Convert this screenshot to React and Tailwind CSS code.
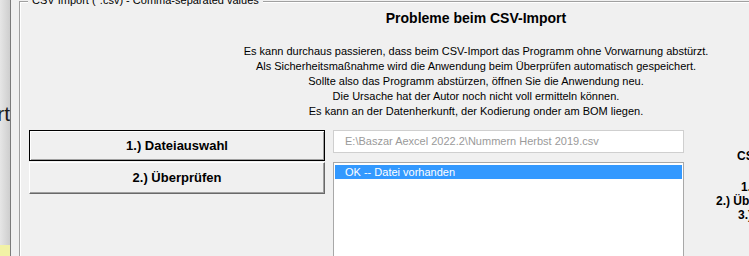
export default function App() {
  return (
    <div className="flex h-[256px] w-[749px] overflow-hidden bg-[#f0f0f0] font-['Liberation_Sans',Arial,sans-serif] text-black">
      {/* window behind, only a sliver visible */}
      <div className="flex w-[10px] shrink-0 flex-col overflow-hidden bg-gradient-to-r from-[#e6e6e6] to-[#cecece]">
        <div className="mt-[102px] flex justify-end whitespace-nowrap text-[21px] leading-[24px] text-[#1a1a1a]">
          <span>Import</span>
        </div>
        <div className="flex-1" />
        <div className="h-[11px] bg-[#f2f2a6]" />
      </div>
      <div className="w-px shrink-0 bg-[#7a7a7a]" />
      <div className="w-[8px] shrink-0" />

      {/* group box */}
      <div className="relative mt-px flex min-w-0 flex-1 flex-col border-l border-t border-[#a0a0a0] shadow-[inset_1px_1px_0_#ffffff]">
        <span className="absolute left-[8px] top-[-8px] whitespace-nowrap bg-[#f0f0f0] px-[4px] text-[11px] leading-[13px]">
          CSV Import (*.csv) - Comma-separated values
        </span>

        <div className="w-[912px] shrink-0 pt-[8px] text-center">
          <h1 className="text-[14px] font-bold leading-[16px]">Probleme beim CSV-Import</h1>
          <div className="mt-[18px] text-[11px] leading-[15px]">
            <p>Es kann durchaus passieren, dass beim CSV-Import das Programm ohne Vorwarnung abstürzt.</p>
            <p>Als Sicherheitsmaßnahme wird die Anwendung beim Überprüfen automatisch gespeichert.</p>
            <p>Sollte also das Programm abstürzen, öffnen Sie die Anwendung neu.</p>
            <p>Die Ursache hat der Autor noch nicht voll ermitteln können.</p>
            <p>Es kann an der Datenherkunft, der Kodierung onder am BOM liegen.</p>
          </div>
        </div>

        <div className="ml-[9px] mt-[11px] flex items-start">
          <div className="flex w-[296px] shrink-0 flex-col gap-px">
            <button className="flex h-[31px] items-center justify-center border border-black bg-[#f0f0f0] text-[13px] font-bold shadow-[inset_1px_1px_0_#ffffff,inset_-1px_-1px_0_#a0a0a0]">
              1.) Dateiauswahl
            </button>
            <button className="flex h-[32px] items-center justify-center border-b border-l border-r border-t border-b-[#696969] border-l-[#ffffff] border-r-[#696969] border-t-[#ffffff] bg-[#f0f0f0] text-[13px] font-bold shadow-[inset_-1px_-1px_0_#a0a0a0]">
              2.) Überprüfen
            </button>
          </div>

          <div className="ml-[8px] flex w-[351px] shrink-0 flex-col">
            <div className="flex h-[23px] items-center border border-[#cfcfcf] bg-white pl-[11px] text-[11px] leading-[13px] text-[#9a9a9a]">
              E:\Baszar Aexcel 2022.2\Nummern Herbst 2019.csv
            </div>
            <div className="mt-[9px] h-[120px] border border-[#a8a8a8] bg-white px-px pt-[2px]">
              <div className="h-[14px] bg-[#3399ff] pl-[10px] text-[11px] leading-[14px] text-white">
                OK -- Datei vorhanden
              </div>
            </div>
          </div>

          <div className="ml-[16px] flex w-[120px] shrink-0 flex-col whitespace-nowrap text-[12px] font-bold leading-[14px]">
            <span className="ml-[37px] mt-[19px]">CSV-Import</span>
            <span className="ml-[41px] mt-[17px]">1.) Dateiauswahl</span>
            <span className="ml-[16px]">2.) Überprüfen</span>
            <span className="ml-[38px]">3.) Import</span>
          </div>
        </div>
      </div>
    </div>
  );
}
